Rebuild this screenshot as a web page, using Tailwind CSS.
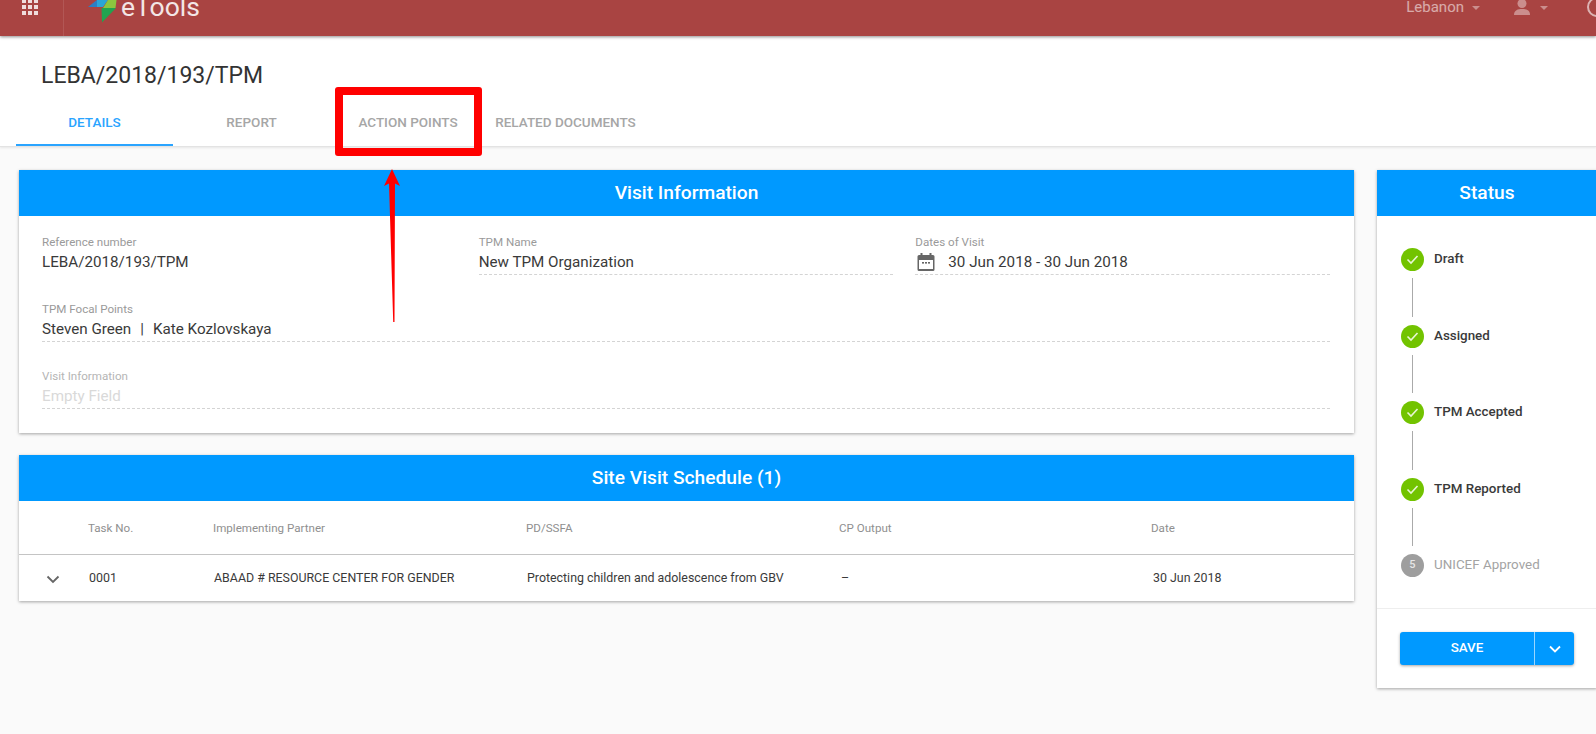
<!DOCTYPE html>
<html lang="en">
<head>
    <meta charset="UTF-8" />
    <title>LEBA/2018/193/TPM - eTools</title>
    <script src="https://cdn.jsdelivr.net/npm/@tailwindcss/browser@4"></script>
</head>
<body class="relative w-[1596px] h-[734px] overflow-hidden bg-[#fafafa] font-['Roboto',sans-serif] text-[#3a3a3a]">

<!-- top bar -->
<header class="relative z-10 h-[36px] bg-[#a94442] shadow-[0_1px_3px_rgba(0,0,0,0.45)] flex overflow-hidden">
    <div class="w-[64px] border-r border-white/10 pl-[22px] h-[36px]">
        <svg width="16" height="16" viewBox="0 0 16 16" fill="#f0dcdc" class="-mt-[1px]">
            <rect x="0" y="0" width="4" height="4"/><rect x="6" y="0" width="4" height="4"/><rect x="12" y="0" width="4" height="4"/>
            <rect x="0" y="6" width="4" height="4"/><rect x="6" y="6" width="4" height="4"/><rect x="12" y="6" width="4" height="4"/>
            <rect x="0" y="12" width="4" height="4"/><rect x="6" y="12" width="4" height="4"/><rect x="12" y="12" width="4" height="4"/>
        </svg>
    </div>
    <div class="flex ml-[24px] h-[36px]">
        <svg width="29" height="24" viewBox="0 0 29 24" class="shrink-0">
            <path d="M0 7 L9 0 V7 Z" fill="#2b7fc4"/>
            <path d="M9 0 H20 L15 7 H9 Z" fill="#2aa5d8"/>
            <path d="M20 0 H28.5 L27.5 8 H15 Z" fill="#8cc63f"/>
            <path d="M13.5 8 H28 L14 22.5 Z" fill="#21a350"/>
        </svg>
        <span class="ml-[4px] -mt-[11px] text-[26.5px] leading-[36px] text-[#f3e6e6]">eTools</span>
    </div>
    <div class="ml-auto flex items-start text-[15px] text-white/55">
        <span class="leading-[15px]">Lebanon</span>
        <span class="ml-[8px] mt-[6px] border-x-[4px] border-x-transparent border-t-[4px] border-t-white/40"></span>
        <svg width="18" height="16" viewBox="0 0 18 16" fill="#ffffff" fill-opacity="0.4" class="ml-[33px]">
            <circle cx="9" cy="3.5" r="4.5"/><path d="M1 15 C1 10 5 9 9 9 C13 9 17 10 17 15 Z"/>
        </svg>
        <span class="ml-[9px] mt-[6px] border-x-[4px] border-x-transparent border-t-[4px] border-t-white/40"></span>
        <span class="ml-[39px] w-[20px] h-[20px] -mt-[3px] -mr-[11px] rounded-full border-2 border-white/60"></span>
    </div>
</header>

<!-- page title + tabs -->
<section class="h-[111px] bg-white border-b border-[#e3e3e3] shadow-[0_1px_2px_rgba(0,0,0,0.08)] pl-[16px]">
    <h1 class="pt-[26px] pl-[25px] h-[63px] text-[23px] leading-[27px] text-[#333]">LEBA/2018/193/TPM</h1>
    <nav class="flex h-[47px] text-[13.5px] font-medium uppercase text-[#a6a6a6]">
        <a class="w-[157px] pt-[2px] flex items-center justify-center text-[#2aa4ff] border-b-[2px] border-[#2aa4ff]">Details</a>
        <a class="w-[157px] flex items-center justify-center">Report</a>
        <a class="w-[156px] flex items-center justify-center">Action Points</a>
        <a class="w-[159px] flex items-center justify-center">Related Documents</a>
    </nav>
</section>

<main class="flex items-start gap-[23px] pl-[19px] pt-[23px]">
    <div class="w-[1335px] flex flex-col gap-[22px] shrink-0">

        <!-- visit information -->
        <div class="bg-white shadow-[0_1px_3px_rgba(0,0,0,0.35)]">
            <h2 class="h-[46px] bg-[#0099ff] text-white text-[19.2px] font-medium flex items-center justify-center">Visit Information</h2>
            <div class="pl-[23px] pr-[24px] pt-[19px] pb-[24px] grid grid-cols-3 gap-x-[22px] gap-y-[27px]">
                <div class="h-[40px]">
                    <div class="text-[11.6px] leading-[14px] text-[#9a9a9a]">Reference number</div>
                    <div class="mt-[2px] text-[15.2px] leading-[22px]">LEBA/2018/193/TPM</div>
                </div>
                <div class="h-[40px] border-b border-dashed border-[#d4d4d4]">
                    <div class="text-[11.6px] leading-[14px] text-[#9a9a9a]">TPM Name</div>
                    <div class="mt-[2px] text-[15.2px] leading-[22px]">New TPM Organization</div>
                </div>
                <div class="h-[40px] border-b border-dashed border-[#d4d4d4]">
                    <div class="text-[11.6px] leading-[14px] text-[#9a9a9a]">Dates of Visit</div>
                    <div class="mt-[2px] text-[15.2px] leading-[22px] flex items-center">
                        <svg width="18" height="20" viewBox="0 0 18 20" fill="none" class="ml-[2px] mr-[13px] shrink-0">
                            <path d="M2 3 H16 A1.5 1.5 0 0 1 17.5 4.5 V17.5 A1.5 1.5 0 0 1 16 19 H2 A1.5 1.5 0 0 1 .5 17.5 V4.5 A1.5 1.5 0 0 1 2 3 Z M2 8 V17 H16 V8 Z" fill="#666" fill-rule="evenodd"/>
                            <rect x="3.5" y="1" width="2" height="3" fill="#666"/><rect x="12.5" y="1" width="2" height="3" fill="#666"/>
                            <rect x="5" y="10" width="2" height="1.6" fill="#666"/><rect x="8" y="10" width="2" height="1.6" fill="#666"/><rect x="11" y="10" width="2" height="1.6" fill="#666"/>
                        </svg>
                        30 Jun 2018 - 30 Jun 2018
                    </div>
                </div>
                <div class="col-span-3 h-[40px] border-b border-dashed border-[#d4d4d4]">
                    <div class="text-[11.6px] leading-[14px] text-[#9a9a9a]">TPM Focal Points</div>
                    <div class="mt-[2px] text-[15.2px] leading-[22px]">Steven Green<span class="mx-[9px]">|</span>Kate Kozlovskaya</div>
                </div>
                <div class="col-span-3 h-[40px] border-b border-dashed border-[#d4d4d4]">
                    <div class="text-[11.6px] leading-[14px] text-[#b5b5b5]">Visit Information</div>
                    <div class="mt-[2px] text-[15.2px] leading-[22px] text-[#d9d9d9]">Empty Field</div>
                </div>
            </div>
        </div>

        <!-- site visit schedule -->
        <div class="bg-white shadow-[0_1px_3px_rgba(0,0,0,0.35)]">
            <h2 class="h-[46px] bg-[#0099ff] text-white text-[19.2px] font-medium flex items-center justify-center">Site Visit Schedule (1)</h2>
            <div class="h-[54px] pt-[3px] grid grid-cols-[69px_125px_313px_313px_312px_1fr] items-center text-[11.6px] text-[#8f8f8f] border-b border-[#c4c4c4]">
                <div></div>
                <div>Task No.</div>
                <div>Implementing Partner</div>
                <div>PD/SSFA</div>
                <div>CP Output</div>
                <div>Date</div>
            </div>
            <div class="h-[46px] grid grid-cols-[69px_125px_313px_313px_312px_1fr] items-center text-[12.4px]">
                <svg width="14" height="9" viewBox="0 0 14 9" fill="none" stroke="#666" stroke-width="1.8" class="ml-[27px] mt-[3px]">
                    <path d="M1.5 1.5 L7 7 L12.5 1.5"/>
                </svg>
                <div class="pl-[1px]">0001</div>
                <div class="pl-[1px]">ABAAD # RESOURCE CENTER FOR GENDER</div>
                <div class="pl-[1px]">Protecting children and adolescence from GBV</div>
                <div class="pl-[2px]">–</div>
                <div class="pl-[2px]">30 Jun 2018</div>
            </div>
        </div>
    </div>

    <!-- status -->
    <aside class="w-[220px] h-[518px] shrink-0 bg-white shadow-[0_1px_3px_rgba(0,0,0,0.35)]">
        <h2 class="h-[46px] bg-[#0099ff] text-white text-[19.2px] font-medium flex items-center justify-center">Status</h2>
        <div class="h-[393px] border-b border-[#eeeeee] pl-[24px] pt-[32px] text-[13.4px] font-medium">
            <div class="flex items-center gap-[10px] h-[23px]">
                <span class="w-[23px] h-[23px] rounded-full bg-[#72c300] flex items-center justify-center">
                    <svg width="13" height="11" viewBox="0 0 13 11" fill="none" stroke="#e8f6d4" stroke-width="1.6"><path d="M1.5 5.5 L5 9 L11.5 2"/></svg>
                </span>
                Draft
            </div>
            <div class="w-[1px] h-[38.5px] mt-[7px] mb-[8px] ml-[11px] bg-[#aaaaaa]"></div>
            <div class="flex items-center gap-[10px] h-[23px]">
                <span class="w-[23px] h-[23px] rounded-full bg-[#72c300] flex items-center justify-center">
                    <svg width="13" height="11" viewBox="0 0 13 11" fill="none" stroke="#e8f6d4" stroke-width="1.6"><path d="M1.5 5.5 L5 9 L11.5 2"/></svg>
                </span>
                Assigned
            </div>
            <div class="w-[1px] h-[38.5px] mt-[7px] mb-[8px] ml-[11px] bg-[#aaaaaa]"></div>
            <div class="flex items-center gap-[10px] h-[23px]">
                <span class="w-[23px] h-[23px] rounded-full bg-[#72c300] flex items-center justify-center">
                    <svg width="13" height="11" viewBox="0 0 13 11" fill="none" stroke="#e8f6d4" stroke-width="1.6"><path d="M1.5 5.5 L5 9 L11.5 2"/></svg>
                </span>
                TPM Accepted
            </div>
            <div class="w-[1px] h-[38.5px] mt-[7px] mb-[8px] ml-[11px] bg-[#aaaaaa]"></div>
            <div class="flex items-center gap-[10px] h-[23px]">
                <span class="w-[23px] h-[23px] rounded-full bg-[#72c300] flex items-center justify-center">
                    <svg width="13" height="11" viewBox="0 0 13 11" fill="none" stroke="#e8f6d4" stroke-width="1.6"><path d="M1.5 5.5 L5 9 L11.5 2"/></svg>
                </span>
                TPM Reported
            </div>
            <div class="w-[1px] h-[38.5px] mt-[7px] mb-[8px] ml-[11px] bg-[#aaaaaa]"></div>
            <div class="flex items-center gap-[10px] h-[23px] font-normal text-[#a3a3a3]">
                <span class="w-[23px] h-[23px] rounded-full bg-[#9e9e9e] text-[#e6e6e6] text-[11px] font-medium flex items-center justify-center">5</span>
                UNICEF Approved
            </div>
        </div>
        <div class="pl-[23px] pt-[23px]">
            <div class="w-[174px] h-[33px] flex rounded-[3px] bg-[#0099ff] text-white text-[13.4px] font-medium shadow-[0_1px_3px_rgba(0,0,0,0.35)]">
                <span class="w-[135px] flex items-center justify-center border-r border-white/60">SAVE</span>
                <span class="flex-1 flex items-center justify-center">
                    <svg width="12" height="8" viewBox="0 0 12 8" fill="none" stroke="#ffffff" stroke-width="1.8"><path d="M1 1.5 L6 6.5 L11 1.5"/></svg>
                </span>
            </div>
        </div>
    </aside>
</main>

<!-- red annotation over the screenshot -->
<div class="absolute left-[335px] top-[87px] w-[147px] h-[69px] z-20 border-[8px] border-[#ff0000] rounded-[3px]"></div>
<svg class="absolute left-[380px] top-[165px] z-20" width="24" height="160" viewBox="0 0 24 160">
    <path d="M12 4 L20 21 L15 18.5 L14.5 157 L13.2 157 L9 18.5 L4 21 Z" fill="#ff0000"/>
</svg>
</body>
</html>
